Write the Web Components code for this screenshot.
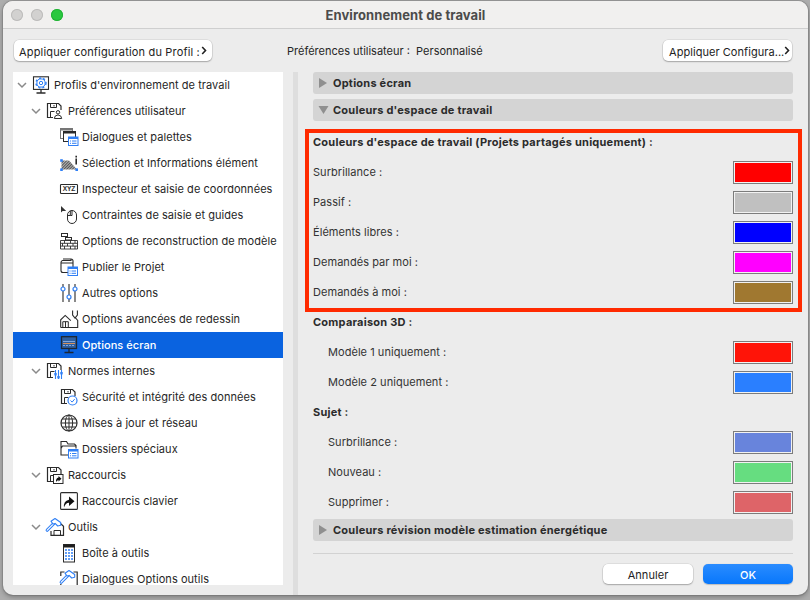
<!DOCTYPE html>
<html lang="fr">
<head>
<meta charset="utf-8">
<title>Environnement de travail</title>
<style>
  html, body { margin: 0; height: 100%; }
  body {
    background: #adadad;
    font-family: Inter, "Liberation Sans", sans-serif;
    font-size: 11px;
    letter-spacing: .05px;
    color: #262626;
    overflow: hidden;
  }
</style>
</head>
<body>
<dialog-window heading="Environnement de travail">
  <tool-bar slot="toolbar">
    <mac-button wide chevron>Appliquer configuration du Profil :</mac-button>
    <span slot="status">Préférences utilisateur :&nbsp; Personnalisé</span>
    <mac-button slot="end" narrow chevron>Appliquer Configura...</mac-button>
  </tool-bar>

  <tree-list slot="tree">
    <tree-row level="0" open icon="profiles">Profils d'environnement de travail</tree-row>
    <tree-row level="1" open icon="prefs">Préférences utilisateur</tree-row>
    <tree-row level="2" icon="dialogs">Dialogues et palettes</tree-row>
    <tree-row level="2" icon="selection">Sélection et Informations élément</tree-row>
    <tree-row level="2" icon="xyz">Inspecteur et saisie de coordonnées</tree-row>
    <tree-row level="2" icon="mouse">Contraintes de saisie et guides</tree-row>
    <tree-row level="2" icon="bricks">Options de reconstruction de modèle</tree-row>
    <tree-row level="2" icon="publish">Publier le Projet</tree-row>
    <tree-row level="2" icon="sliders">Autres options</tree-row>
    <tree-row level="2" icon="redraw">Options avancées de redessin</tree-row>
    <tree-row level="2" icon="screen" selected>Options écran</tree-row>
    <tree-row level="1" open icon="norms">Normes internes</tree-row>
    <tree-row level="2" icon="secure">Sécurité et intégrité des données</tree-row>
    <tree-row level="2" icon="globe">Mises à jour et réseau</tree-row>
    <tree-row level="2" icon="folder">Dossiers spéciaux</tree-row>
    <tree-row level="1" open icon="shortcuts">Raccourcis</tree-row>
    <tree-row level="2" icon="keyboard">Raccourcis clavier</tree-row>
    <tree-row level="1" open icon="tools">Outils</tree-row>
    <tree-row level="2" icon="toolbox">Boîte à outils</tree-row>
    <tree-row level="2" icon="tooloptions">Dialogues Options outils</tree-row>
  </tree-list>

  <section-bar slot="pane">Options écran</section-bar>
  <section-bar slot="pane" open>Couleurs d'espace de travail</section-bar>

  <red-frame slot="pane">
    <group-title>Couleurs d'espace de travail (Projets partagés uniquement) :</group-title>
    <color-row color="#ff0000">Surbrillance :</color-row>
    <color-row color="#c0c0c0">Passif :</color-row>
    <color-row color="#0000ff">Éléments libres :</color-row>
    <color-row color="#ff00ff">Demandés par moi :</color-row>
    <color-row color="#a07830">Demandés à moi :</color-row>
  </red-frame>

  <group-title slot="pane">Comparaison 3D :</group-title>
  <color-row slot="pane" indent color="#ff1408">Modèle 1 uniquement :</color-row>
  <color-row slot="pane" indent color="#2a7fff">Modèle 2 uniquement :</color-row>
  <group-title slot="pane" spaced>Sujet :</group-title>
  <color-row slot="pane" indent color="#6884dc">Surbrillance :</color-row>
  <color-row slot="pane" indent color="#66dd80">Nouveau :</color-row>
  <color-row slot="pane" indent color="#de6468">Supprimer :</color-row>
  <section-bar slot="pane" last>Couleurs révision modèle estimation énergétique</section-bar>

  <mac-button slot="footer" action>Annuler</mac-button>
  <mac-button slot="footer" action primary>OK</mac-button>
</dialog-window>

<script>
const DARK = '#2b2b2b';
const BLUE = '#2f7ff5';

// blue list card that sits on the lower right of several icons
const card = (x, y) => `
  <rect x="${x}" y="${y}" width="9.5" height="8.5" fill="#fff" stroke="${BLUE}"/>
  <rect x="${x}" y="${y}" width="9.5" height="2" fill="${BLUE}"/>
  <path d="M${x + 1.5} ${y + 4}h1M${x + 3.5} ${y + 4}h4.5M${x + 1.5} ${y + 6.3}h1M${x + 3.5} ${y + 6.3}h4.5" stroke="${BLUE}"/>`;

const floppy = `
  <path d="M7 15.5H1.5V1.5h11l2.5 2.5v4" fill="none" stroke="${DARK}" stroke-width="1.2"/>
  <path d="M4.5 1.5v4h6v-4M8 3v1.5" fill="none" stroke="${DARK}"/>
  <path d="M4.5 15.5v-6h4" fill="none" stroke="${DARK}"/>`;

const hammer = `
  <path d="M1.2 12.2l7.5-7.5" stroke="${BLUE}" stroke-width="3.2" stroke-linecap="round"/>
  <path d="M1.2 12.2l7.5-7.5" stroke="#fff" stroke-width="1.2" stroke-linecap="round"/>
  <path d="M5 3.2L9 .5l5.7 4v2.8l-3 .7-2.6-2.6-2 .7z" fill="#fff" stroke="${BLUE}" stroke-width="1.1" stroke-linejoin="round"/>`;

const ICONS = {
  profiles: `
    <rect x="1.5" y=".8" width="15" height="12.6" fill="#fff" stroke="${DARK}" stroke-width="1.1"/>
    <path d="M9 13.5v3.2M4.5 17h9" stroke="${DARK}" stroke-width="1.3"/>
    <circle cx="9" cy="7" r="4.1" fill="none" stroke="${BLUE}"/>
    <circle cx="9" cy="7" r="5" fill="none" stroke="${BLUE}" stroke-width="1.4" stroke-dasharray="2 2.2"/>
    <circle cx="9" cy="7" r="1.7" fill="none" stroke="${BLUE}"/>`,
  prefs: `${floppy}
    <circle cx="12" cy="10.3" r="1.7" fill="#fff" stroke="${DARK}"/>
    <path d="M8.3 16.5q.2-3.3 3.7-3.6 3.5.3 3.7 3.6z" fill="#fff" stroke="${DARK}"/>`,
  dialogs: `
    <rect x=".5" y=".5" width="12" height="10" fill="#fff" stroke="#777"/>
    <rect x=".5" y=".5" width="12" height="2" fill="#777"/>
    <rect x="3.5" y="3.5" width="12" height="10" fill="#fff" stroke="${DARK}"/>
    <rect x="3.5" y="3.5" width="12" height="2" fill="${DARK}"/>
    ${card(8.5, 9)}`,
  selection: `
    <defs><pattern id="h" width="2" height="2" patternUnits="userSpaceOnUse" patternTransform="rotate(45)">
      <rect width="2" height="2" fill="#555"/><rect width=".8" height="2" fill="#ccc"/></pattern></defs>
    <path d="M1.5 6.5h7.5l8 9H1.5z" fill="url(#h)"/>
    <path d="M16.2 1.8v1.6M16.2 4.5V10.5" stroke="${DARK}" stroke-width="1.6"/>
    <rect x=".2" y="5.2" width="2.6" height="2.6" fill="${BLUE}"/>
    <rect x=".2" y="14.4" width="2.6" height="2.6" fill="${BLUE}"/>
    <rect x="15.4" y="14.4" width="2.6" height="2.6" fill="${BLUE}"/>`,
  xyz: `
    <rect x=".5" y="4.5" width="17" height="9" rx=".8" fill="#fff" stroke="${DARK}" stroke-width="1.1"/>
    <text x="9" y="11.4" text-anchor="middle" font-family="Liberation Sans" font-weight="700" font-size="6.6" textLength="12.5" fill="${DARK}">XYZ</text>`,
  mouse: `
    <path d="M1 0v6.5l1.6-1.4 3.6-.2z" fill="#333"/>
    <rect x="7.5" y="4.5" width="9" height="13" rx="4.5" fill="#fff" stroke="${DARK}"/>
    <path d="M7.5 9.5h2.8M12 4.5v5h-1.7V4.8" fill="none" stroke="${DARK}"/>`,
  bricks: `
    <rect x="1.5" y="1.5" width="6" height="3" fill="none" stroke="${DARK}"/>
    <rect x="5.5" y="5.5" width="6" height="2.5" fill="none" stroke="${DARK}"/>
    <path d="M.5 8.5h17v8.5H.5zM.5 11.3h17M.5 14.1h17M4.5 8.5v2.8M10.5 8.5v2.8M15 8.5v2.8M2.5 11.3v2.8M7.5 11.3v2.8M13 11.3v2.8M4.5 14.1V17M10.5 14.1V17M15 14.1V17" fill="none" stroke="${DARK}" stroke-width=".9"/>`,
  publish: `
    <path d="M2.5 2.5h8.5v-1M2.5 2.5a2 2 0 0 0-1.5 2v8a2 2 0 0 0 2 2h6M3 1h8q2 0 2 2v6" fill="none" stroke="${DARK}" stroke-width="1.1"/>
    <path d="M1 5h12" stroke="${DARK}"/>
    ${card(8, 9)}`,
  sliders: `
    <path d="M3 0v18M9 0v18M15 0v18" stroke="${DARK}" stroke-width="1.1"/>
    <circle cx="3" cy="5" r="2" fill="#fff" stroke="${BLUE}" stroke-width="1.2"/>
    <circle cx="9" cy="13" r="2" fill="#fff" stroke="${BLUE}" stroke-width="1.2"/>
    <circle cx="15" cy="5" r="2" fill="#fff" stroke="${BLUE}" stroke-width="1.2"/>`,
  redraw: `
    <path d="M.7 17.5V9.8L5.2 5.4l5.6 5.2M.7 17.5h17V10.4L15.2 7.5" fill="none" stroke="${DARK}" stroke-width="1.1"/>
    <path d="M2.8 17.5v-5.8h5.5v5.8M5.5 11.7v5.8" fill="none" stroke="${DARK}"/>
    <path d="M12.6.5v4.5l2.4 3 2.4-3V.5" fill="none" stroke="${DARK}" stroke-width="1.1"/>`,
  screen: `
    <rect x="1.5" y=".7" width="15" height="11.8" fill="#2f5f9e" stroke="#1d2733" stroke-width="1.3"/>
    <path d="M3 5.5h12" stroke="#7fa6dc"/><path d="M3 7.5h12" stroke="#d6925c"/><path d="M3 9.5h12" stroke="#7fa6dc" stroke-dasharray="2 1"/>
    <path d="M9 12.5v3.5M4.5 16.5h9" stroke="#1d2733" stroke-width="1.3"/>`,
  norms: `${floppy}
    <path d="M9.5 8v9M12.5 8v9M15.5 8v9" stroke="${BLUE}" stroke-width="1.1"/>
    <rect x="8.3" y="11" width="2.4" height="2.4" fill="${BLUE}"/>
    <rect x="11.3" y="14" width="2.4" height="2.4" fill="${BLUE}"/>
    <rect x="14.3" y="10" width="2.4" height="2.4" fill="${BLUE}"/>`,
  secure: `${floppy}
    <circle cx="12.5" cy="12.5" r="4.5" fill="#fff" stroke="${BLUE}" stroke-width="1.2"/>
    <path d="M10.5 12.5l1.6 1.6 2.6-3" fill="none" stroke="${BLUE}"/>`,
  globe: `
    <circle cx="9" cy="9" r="8" fill="#fff" stroke="${DARK}" stroke-width="1.2"/>
    <ellipse cx="9" cy="9" rx="3.6" ry="8" fill="none" stroke="${DARK}"/>
    <path d="M9 1v16M1 9h16M2.2 5h13.6M2.2 13h13.6" fill="none" stroke="${DARK}"/>`,
  folder: `
    <path d="M8 15H1V1.5h5.5l1.5 2.5h6.5l1.5 1.5v3M1 8.5l1.5-2.5h14" fill="none" stroke="${DARK}" stroke-width="1.1"/>
    ${card(8.5, 9.5)}`,
  shortcuts: `${floppy}
    <rect x="7.5" y="8.5" width="9.5" height="9" fill="#fff" stroke="${DARK}"/>
    <path d="M10 16q-.3-3.8 2.5-4.5V10l3 2.8-3 2.7v-1.6q-1.5.2-2.5 2.1z" fill="#111"/>`,
  keyboard: `
    <rect x=".6" y=".6" width="16.8" height="16.8" rx="1" fill="#fff" stroke="${DARK}" stroke-width="1.1"/>
    <path d="M4 15.5q-.8-6.6 5-7.8V4.5l5.5 4.8-5.5 4.7v-3.2q-3.6.2-5 4.7z" fill="#111"/>`,
  tools: `
    <path d="M14.5 5.5l3 2.7v9.2H5V13" fill="none" stroke="${DARK}" stroke-width="1.2"/>
    <path d="M8 17.5v-5h6.5v5" fill="none" stroke="${DARK}"/>
    ${hammer}`,
  toolbox: `
    <rect x="3.5" y=".5" width="11" height="17.5" fill="#fff" stroke="${DARK}"/>
    <rect x="3.5" y=".5" width="11" height="3" fill="#1e1e1e"/>
    <path d="M5 6h8M5 9h8M5 12h8M5 15h8" stroke="${BLUE}" stroke-width="1.4"/>
    <path d="M7.5 5v11M10.5 5v11" stroke="#fff"/>`,
  tooloptions: `
    <path d="M4.5 2H.8v4M13.5 2h3.7v16M.8 14v4" fill="none" stroke="${DARK}" stroke-width="1.2"/>
    ${hammer}`
};

const makeTemplate = html => {
  const t = document.createElement('template');
  t.innerHTML = html;
  return t;
};

// small base so every element does the same shadow setup
class ShadowEl extends HTMLElement {
  constructor(tpl) {
    super();
    this.attachShadow({ mode: 'open' });
    this.shadowRoot.appendChild(tpl.content.cloneNode(true));
  }
}

const windowTemplate = makeTemplate(`
  <style>
    :host {
      display: flex;
      flex-direction: column;
      box-sizing: border-box;
      width: 805px;
      height: 594px;
      margin: 1px 0 0 3px;
      background: #ececec;
      border-radius: 10px;
      overflow: hidden;
      box-shadow: 0 0 0 1px rgba(90,90,90,.25), 0 2px 5px rgba(0,0,0,.3);
    }
    .title {
      flex: none;
      box-sizing: border-box;
      height: 28px;
      padding-top: 1px;
      line-height: 27px;
      text-align: center;
      font-weight: 700;
      font-size: 13px;
      letter-spacing: .08px;
      color: #4b4b4b;
      background: #f1f0ef;
      border-bottom: 1px solid #cfcfcf;
      position: relative;
    }
    .lights {
      position: absolute;
      left: 8px;
      top: 8px;
      display: flex;
      gap: 8px;
    }
    .lights i {
      width: 12px;
      height: 12px;
      border-radius: 50%;
      background: #d2d1d0;
      box-shadow: inset 0 0 0 1px #bdbcbb;
    }
    .lights i:last-child { background: #2ac840; box-shadow: inset 0 0 0 1px #22b236; }
    .main {
      flex: 1;
      min-height: 0;
      display: flex;
      padding-left: 10px;
    }
    .left { flex: none; width: 270px; height: 513px; background: #fff; overflow: hidden; }
    .splitter { flex: none; width: 5px; margin-left: 10px; background: #dedede; }
    .pane {
      flex: 1;
      min-width: 0;
      display: flex;
      flex-direction: column;
      padding: 0 15px 0 15px;
    }
    .rule { height: 1px; background: #d2d2d2; margin-top: 12px; }
    .footer { display: flex; justify-content: flex-end; gap: 10px; margin-top: 10px; }
  </style>
  <div class="title">
    <div class="lights"><i></i><i></i><i></i></div>
    <span id="heading"></span>
  </div>
  <slot name="toolbar"></slot>
  <div class="main">
    <div class="left"><slot name="tree"></slot></div>
    <div class="splitter"></div>
    <div class="pane">
      <slot name="pane"></slot>
      <div class="rule"></div>
      <div class="footer"><slot name="footer"></slot></div>
    </div>
  </div>
`);

class DialogWindow extends ShadowEl {
  constructor() { super(windowTemplate); }
  connectedCallback() {
    this.shadowRoot.getElementById('heading').textContent = this.getAttribute('heading');
  }
}

const toolbarTemplate = makeTemplate(`
  <style>
    :host {
      display: flex;
      align-items: flex-start;
      flex: none;
      box-sizing: border-box;
      height: 43px;
      padding: 11px 16px 0 11px;
    }
    .status { margin-left: 75px; padding-top: 2px; line-height: 19px; letter-spacing: 0; }
    .end { margin-left: auto; }
  </style>
  <slot></slot>
  <div class="status"><slot name="status"></slot></div>
  <div class="end"><slot name="end"></slot></div>
`);
class ToolBar extends ShadowEl { constructor() { super(toolbarTemplate); } }

const buttonTemplate = makeTemplate(`
  <style>
    :host {
      display: inline-flex;
      align-items: center;
      justify-content: space-between;
      box-sizing: border-box;
      height: 21px;
      padding: 0 5px 0 5px;
      background: #fff;
      border-radius: 5px;
      box-shadow: 0 0 0 .5px rgba(0,0,0,.12), 0 1px 1.5px rgba(0,0,0,.25);
      color: #222;
      white-space: nowrap;
    }
    :host([wide]) { width: 198px; letter-spacing: .17px; }
    :host([narrow]) { width: 129px; padding-left: 6px; }
    :host([action]) { width: 90px; height: 20px; justify-content: center; }
    :host([primary]) {
      background: linear-gradient(#2a8cff, #0877fb);
      color: #fff;
      font-weight: 500;
      box-shadow: 0 .5px 1px rgba(0,0,0,.2);
    }
    .text { padding-top: 2px; }
    svg { display: none; flex: none; }
    :host([chevron]) svg { display: block; }
  </style>
  <span class="text"><slot></slot></span>
  <svg width="6" height="9" viewBox="0 0 6 9"><path d="M1.2 1l3.3 3.5L1.2 8" fill="none" stroke="#222" stroke-width="1.6"/></svg>
`);
class MacButton extends ShadowEl { constructor() { super(buttonTemplate); } }

const listTemplate = makeTemplate(`
  <style>:host { display: block; }</style>
  <slot></slot>
`);
class TreeList extends ShadowEl { constructor() { super(listTemplate); } }

const rowTemplate = makeTemplate(`
  <style>
    :host {
      display: flex;
      align-items: center;
      height: 26px;
      white-space: nowrap;
      color: #262626;
    }
    :host([selected]) { background: #0a63e0; color: #fff; font-weight: 500; }
    .arrow { flex: none; width: 19px; height: 26px; display: flex; align-items: center; padding-left: 4px; box-sizing: border-box; }
    .arrow svg { visibility: hidden; }
    :host([open]) .arrow svg { visibility: visible; }
    .icon { flex: none; width: 18px; height: 18px; margin-right: 4px; }
    .icon svg { display: block; overflow: visible; }
  </style>
  <div class="arrow"><svg width="10" height="7" viewBox="0 0 10 7"><path d="M1 1l4 4 4-4" fill="none" stroke="#8a8a8a" stroke-width="1.5"/></svg></div>
  <div class="icon"></div>
  <span><slot></slot></span>
`);
class TreeRow extends ShadowEl {
  constructor() { super(rowTemplate); }
  connectedCallback() {
    this.style.paddingLeft = (Number(this.getAttribute('level')) * 14) + 'px';
    this.shadowRoot.querySelector('.icon').innerHTML =
      `<svg width="18" height="18" viewBox="0 0 18 18">${ICONS[this.getAttribute('icon')]}</svg>`;
  }
}

const sectionTemplate = makeTemplate(`
  <style>
    :host {
      display: flex;
      align-items: center;
      flex: none;
      height: 22px;
      padding-left: 5px;
      background: #d4d4d4;
      border-radius: 3px;
      font-weight: 700;
      letter-spacing: .23px;
      color: #2b2b2b;
    }
    :host([open]) { margin-top: 5px; }
    :host([last]) { margin-top: 2px; }
    svg { flex: none; width: 11px; height: 10px; margin-right: 4px; }
    .down { display: none; }
    :host([open]) .down { display: block; }
    :host([open]) .right { display: none; }
  </style>
  <svg class="right" viewBox="0 0 11 10"><path d="M1 0l8 5-8 5z" fill="#8f8f8f"/></svg>
  <svg class="down" viewBox="0 0 11 10"><path d="M.5 1h10l-5 8z" fill="#8f8f8f"/></svg>
  <span><slot></slot></span>
`);
class SectionBar extends ShadowEl { constructor() { super(sectionTemplate); } }

const frameTemplate = makeTemplate(`
  <style>
    :host {
      display: block;
      flex: none;
      box-sizing: border-box;
      height: 183px;
      margin: 8px -9px 0 -8px;
      padding: 0 5px 0 4px;
      border: 4px solid #ff2a00;
    }
    .inner { margin-top: -1px; }
  </style>
  <div class="inner"><slot></slot></div>
`);
class RedFrame extends ShadowEl { constructor() { super(frameTemplate); } }

const titleTemplate = makeTemplate(`
  <style>
    :host {
      display: block;
      height: 20px;
      line-height: 20px;
      margin-bottom: 5px;
      font-weight: 700;
      letter-spacing: .23px;
      color: #2b2b2b;
    }
    :host([spaced]) { margin-top: 5px; }
  </style>
  <slot></slot>
`);
class GroupTitle extends ShadowEl { constructor() { super(titleTemplate); } }

const colorTemplate = makeTemplate(`
  <style>
    :host {
      display: flex;
      align-items: center;
      justify-content: space-between;
      height: 30px;
      color: #333;
    }
    :host([indent]) { padding-left: 15px; }
    .swatch {
      box-sizing: border-box;
      width: 60px;
      height: 23px;
      border: 1px solid #7c7c7c;
      box-shadow: inset 0 0 0 1px #f2f2f2;
    }
  </style>
  <span><slot></slot></span>
  <div class="swatch"></div>
`);
class ColorRow extends ShadowEl {
  constructor() { super(colorTemplate); }
  connectedCallback() {
    this.shadowRoot.querySelector('.swatch').style.background = this.getAttribute('color');
  }
}

customElements.define('dialog-window', DialogWindow);
customElements.define('tool-bar', ToolBar);
customElements.define('mac-button', MacButton);
customElements.define('tree-list', TreeList);
customElements.define('tree-row', TreeRow);
customElements.define('section-bar', SectionBar);
customElements.define('red-frame', RedFrame);
customElements.define('group-title', GroupTitle);
customElements.define('color-row', ColorRow);
</script>
</body>
</html>
